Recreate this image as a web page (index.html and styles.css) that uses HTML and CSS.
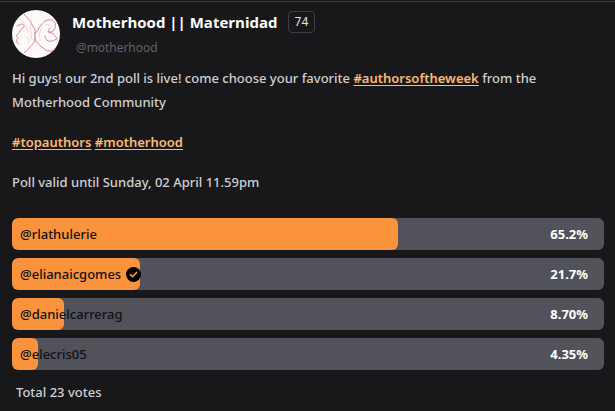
FILE: index.html
```html
<!DOCTYPE html>
<html lang="en">
<head>
<meta charset="utf-8">
<meta name="viewport" content="width=device-width, initial-scale=1">
<title>Motherhood || Maternidad</title>
<link rel="stylesheet" href="styles.css">
</head>
<body>
<article class="post">
  <header class="author">
    <svg class="avatar" viewBox="0 0 48 48" aria-hidden="true">
      <circle class="avatar-bg" cx="24" cy="24" r="24"/>
      <g class="avatar-lines">
        <path d="M12 4c2 4 7 5 7 9 1 3 3 4 4 7 1 3-1 6 0 9-1 5-3 5-5 8-2 3-4 4-6 6"/>
        <path d="M22 24c4-1 4-6 7-9 4-4 6-6 10-5 4 1 5 4 4 8-1 3-4 5-7 4"/>
        <path d="M23 27c0 5 4 8 8 11 4 3 8 5 12 1"/>
        <path d="M5 16c3-2 6-3 7 0 1 2-3 2-4 5-1 3-5 4-3 6 2 1 0 2-1 4 2 1 1 3 3 3"/>
        <path d="M38 18c-3 2-1 5 2 5 3 1 2 4 5 5M33 26c0 4 3 6 7 5 2 0 3-2 5-2"/>
      </g>
      <g class="avatar-faint">
        <path d="M8 9c4 4 7 7 8 13M14 27c3 1 4 3 2 7M30 18c-3 5-4 8-1 12M34 15c3-1 5 0 6 2M18 16c2 5 0 9 2 14"/>
      </g>
    </svg>
    <div class="identity">
      <div class="title-row">
        <h1 class="name">Motherhood || Maternidad</h1>
        <span class="score">74</span>
      </div>
      <span class="handle">@motherhood</span>
    </div>
  </header>

  <div class="content">
    <p>Hi guys! our 2nd poll is live! come choose your favorite <a href="#authorsoftheweek">#authorsoftheweek</a> from the Motherhood Community</p>
    <p><a href="#topauthors">#topauthors</a> <a href="#motherhood">#motherhood</a></p>
    <p>Poll valid until Sunday, 02 April 11.59pm</p>
  </div>

  <ul class="poll">
    <li class="option">
      <span class="fill" style="width:65.2%"></span>
      <span class="choice">@rlathulerie</span>
      <span class="share">65.2%</span>
    </li>
    <li class="option">
      <span class="fill" style="width:21.7%"></span>
      <span class="choice">@elianaicgomes
        <svg class="check" viewBox="0 0 14 14" role="img" aria-label="Your vote"><circle cx="7" cy="7" r="7"/><path d="M4.2 7.2l2 1.9 3.7-4"/></svg>
      </span>
      <span class="share">21.7%</span>
    </li>
    <li class="option">
      <span class="fill" style="width:8.7%"></span>
      <span class="choice">@danielcarrerag</span>
      <span class="share">8.70%</span>
    </li>
    <li class="option">
      <span class="fill" style="width:4.35%"></span>
      <span class="choice">@elecris05</span>
      <span class="share">4.35%</span>
    </li>
  </ul>
  <p class="total">Total 23 votes</p>
</article>
</body>
</html>
```
FILE: styles.css
```css
* {
  box-sizing: border-box;
}

body {
  margin: 0;
  padding-top: 1px;
  background: #18181b;
  color: #d0d0d4;
  font-family: "Noto Sans", "Open Sans", sans-serif;
  font-size: 13px;
  font-weight: 500;
  line-height: 24px;
}

h1,
p,
ul {
  margin: 0;
  padding: 0;
}

.post {
  padding: 8px 11px 0 12px;
  border-top: 1px solid #3f3f46;
}

.author {
  display: flex;
  gap: 12px;
  height: 48px;
}

.avatar {
  flex: none;
  width: 48px;
  height: 48px;
}

.avatar-bg {
  fill: #fefafa;
}

.avatar-lines,
.avatar-faint {
  fill: none;
  stroke: #e07f92;
  stroke-width: 1;
  stroke-linecap: round;
}

.avatar-faint {
  stroke: #f5cfd5;
}

.title-row {
  display: flex;
  align-items: center;
  gap: 10px;
}

.name {
  color: #fff;
  font-family: "Open Sans", sans-serif;
  font-size: 15px;
  font-weight: 700;
  line-height: 24px;
}

.score {
  padding: 0 6px;
  border: 1px solid #3f3f46;
  border-radius: 4px;
  color: #e4e4e7;
  font-size: 12px;
  font-weight: 400;
  line-height: 20px;
}

.handle {
  display: block;
  padding: 2px 0 0 4px;
  color: #66666e;
  font-family: "Open Sans", sans-serif;
  font-size: 12px;
  font-weight: 400;
}

.content {
  display: flex;
  flex-direction: column;
  gap: 16px;
  padding: 8px 0 24px;
}

.content a {
  color: #fdba74;
  font-weight: 600;
  text-underline-offset: 2px;
}

.poll {
  display: grid;
  gap: 8px;
  list-style: none;
}

.option {
  position: relative;
  display: flex;
  align-items: center;
  justify-content: space-between;
  height: 32px;
  padding: 0 16px 0 8px;
  border-radius: 6px;
  background: #52525b;
  overflow: hidden;
}

.fill {
  position: absolute;
  inset: 0 auto 0 0;
  border-radius: 6px;
  background: #fb923c;
}

.choice,
.share {
  position: relative;
}

.choice {
  display: flex;
  align-items: center;
  gap: 5px;
  color: #111113;
}

.share {
  color: #fff;
  font-weight: 700;
}

.check {
  width: 15px;
  height: 15px;
}

.check circle {
  fill: #000;
}

.check path {
  fill: none;
  stroke: #fb923c;
  stroke-width: 1.6;
  stroke-linecap: round;
  stroke-linejoin: round;
}

.total {
  padding: 10px 4px 0;
}
```
